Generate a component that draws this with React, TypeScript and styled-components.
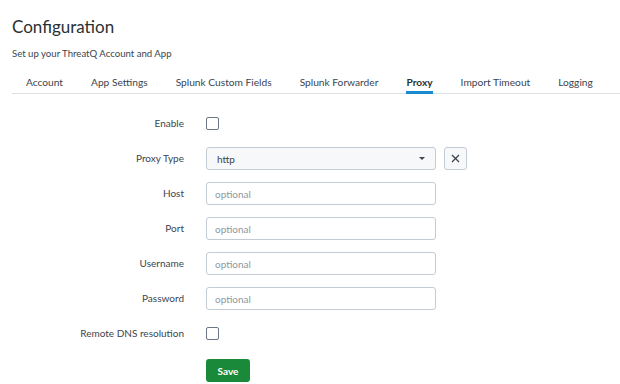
import { Fragment } from 'react';
import styled, { createGlobalStyle } from 'styled-components';

const GlobalStyle = createGlobalStyle`
  html, body {
    margin: 0;
    padding: 0;
    background: #ffffff;
  }
  body {
    font-family: Lato, "Open Sans", Arial, sans-serif;
    color: #3c444d;
  }
`;

const Page = styled.div`
  width: 620px;
  height: 384px;
  padding: 15px 0 0 12px;
  box-sizing: border-box;
  overflow: hidden;
`;

const Title = styled.h1`
  margin: 0;
  font-size: 17px;
  line-height: 24px;
  font-weight: 400;
  color: #2b3033;
`;

const Subtitle = styled.p`
  margin: 8px 0 0;
  font-size: 9.6px;
  line-height: 14px;
`;

const TabBar = styled.div`
  display: flex;
  margin-top: 10px;
  border-bottom: 1px solid #dce0e5;
`;

const Tab = styled.div<{ $active?: boolean }>`
  position: relative;
  flex-shrink: 0;
  white-space: nowrap;
  padding: 4px 14px 4px;
  font-size: 10.2px;
  line-height: 14px;
  font-weight: ${(p) => (p.$active ? 700 : 400)};
  color: ${(p) => (p.$active ? '#2b3033' : '#3c444d')};

  &::after {
    content: '';
    display: ${(p) => (p.$active ? 'block' : 'none')};
    position: absolute;
    left: 14px;
    right: 14px;
    bottom: -1px;
    height: 3px;
    background: #1a8bd0;
  }
`;

const Form = styled.div`
  display: grid;
  grid-template-columns: 172px auto;
  column-gap: 22px;
  row-gap: 12px;
  padding-top: 18px;
  align-items: center;
`;

const Label = styled.div`
  text-align: right;
  font-size: 10px;
  line-height: 23px;
  white-space: nowrap;
`;

const Controls = styled.div<{ $offset?: number }>`
  display: flex;
  align-items: center;
  gap: 8px;
  height: 23px;
  margin-top: ${(p) => p.$offset ?? 0}px;
`;

const Checkbox = styled.span`
  width: 11px;
  height: 11px;
  border: 1px solid #6b7785;
  border-radius: 2px;
  background: #ffffff;
`;

const Input = styled.input`
  width: 230px;
  height: 23px;
  box-sizing: border-box;
  border: 1px solid #c3cbd4;
  border-radius: 3px;
  padding: 0 8px;
  font-family: inherit;
  font-size: 10px;
  color: #3c444d;
  background: #ffffff;
  outline: none;

  &::placeholder {
    color: #8f989f;
  }
`;

const Select = styled.div`
  width: 230px;
  height: 23px;
  box-sizing: border-box;
  border: 1px solid #c3cbd4;
  border-radius: 3px;
  padding: 0 10px;
  display: flex;
  align-items: center;
  justify-content: space-between;
  font-size: 10px;
  background: #f7f8fa;
`;

const Caret = styled.span`
  width: 0;
  height: 0;
  border-left: 3px solid transparent;
  border-right: 3px solid transparent;
  border-top: 3px solid #3c444d;
`;

const ClearButton = styled.button`
  width: 23px;
  height: 23px;
  box-sizing: border-box;
  border: 1px solid #c3cbd4;
  border-radius: 3px;
  background: #f7f8fa;
  padding: 0;
  display: flex;
  align-items: center;
  justify-content: center;
`;

const SaveButton = styled.button`
  width: 44px;
  height: 23px;
  border: none;
  border-radius: 3px;
  background: #1a8a3a;
  color: #ffffff;
  font-family: inherit;
  font-size: 10px;
  font-weight: 700;
  padding: 0;
`;

const tabs = [
  'Account',
  'App Settings',
  'Splunk Custom Fields',
  'Splunk Forwarder',
  'Proxy',
  'Import Timeout',
  'Logging',
];

const textFields = ['Host', 'Port', 'Username', 'Password'];

const App = () => {
  return (
    <Page>
      <GlobalStyle />
      <Title>Configuration</Title>
      <Subtitle>Set up your ThreatQ Account and App</Subtitle>
      <TabBar>
        {tabs.map((t) => (
          <Tab key={t} $active={t === 'Proxy'}>
            {t}
          </Tab>
        ))}
      </TabBar>
      <Form>
        <Label>Enable</Label>
        <Controls>
          <Checkbox />
        </Controls>

        <Label>Proxy Type</Label>
        <Controls>
          <Select>
            <span>http</span>
            <Caret />
          </Select>
          <ClearButton>
            <svg width="9" height="9" viewBox="0 0 9 9">
              <path d="M1 1 L8 8 M8 1 L1 8" stroke="#3c444d" strokeWidth="1.3" />
            </svg>
          </ClearButton>
        </Controls>

        {textFields.map((f) => (
          <Fragment key={f}>
            <Label>{f}</Label>
            <Controls>
              <Input placeholder="optional" />
            </Controls>
          </Fragment>
        ))}

        <Label>Remote DNS resolution</Label>
        <Controls>
          <Checkbox />
        </Controls>

        <span />
        <Controls $offset={2}>
          <SaveButton>Save</SaveButton>
        </Controls>
      </Form>
    </Page>
  );
};

export default App;
